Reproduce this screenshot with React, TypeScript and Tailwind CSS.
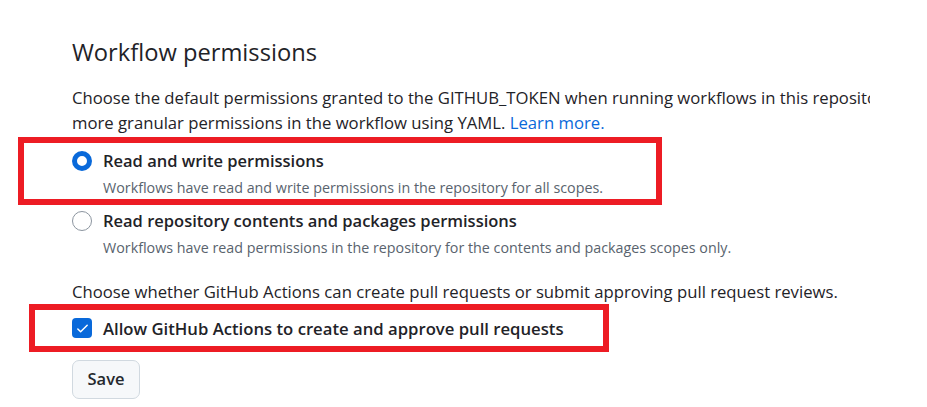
import React from 'react';

const RedMark = () => (
    <span className="pointer-events-none absolute inset-0 border-[6px] border-[#ed1c24]" />
);

interface OptionProps {
    label: string;
    hint: string;
    checked?: boolean;
}

const RadioOption = ({ label, hint, checked }: OptionProps) => (
    <div className="flex items-start gap-[11px]">
        <span
            className={
                checked
                    ? 'mt-[2px] h-[20px] w-[20px] shrink-0 rounded-full border-[5px] border-[#0969da] bg-white'
                    : 'mt-[2px] h-[20px] w-[20px] shrink-0 rounded-full border border-[#8c959f] bg-white'
            }
        />
        <div>
            <div className="text-[16.5px] leading-[24px] font-semibold text-[#1f2328]">{label}</div>
            <div className="mt-[5px] text-[14.3px] leading-[20px] whitespace-nowrap text-[#59636e]">{hint}</div>
        </div>
    </div>
);

export default function App() {
    return (
        <div className="h-[407px] w-[927px] overflow-hidden bg-white font-['Open_Sans',sans-serif] text-[#1f2328]">
            <div className="relative ml-[72px] w-[798px] pt-[35px]">
                <h2 className="text-[23.7px] leading-[34px] font-normal">Workflow permissions</h2>

                <div className="mt-[16px] overflow-hidden text-[16.7px] leading-[25px]">
                    <p className="whitespace-nowrap">
                        Choose the default permissions granted to the GITHUB_TOKEN when running workflows in this repository. You can specify
                    </p>
                    <p className="whitespace-nowrap">
                        more granular permissions in the workflow using YAML.{' '}
                        <a className="text-[#0969da]">Learn more.</a>
                    </p>
                </div>

                <div className="relative mt-[2px] -ml-[54px] h-[68px] w-[644px] pt-[12px] pl-[54px]">
                    <RedMark />
                    <RadioOption
                        checked
                        label="Read and write permissions"
                        hint="Workflows have read and write permissions in the repository for all scopes."
                    />
                </div>

                <div className="mt-[4px]">
                    <RadioOption
                        label="Read repository contents and packages permissions"
                        hint="Workflows have read permissions in the repository for the contents and packages scopes only."
                    />
                </div>

                <p className="mt-[21px] text-[16.7px] leading-[25px] whitespace-nowrap">
                    Choose whether GitHub Actions can create pull requests or submit approving pull request reviews.
                </p>

                <div className="relative -ml-[43px] flex h-[48px] w-[580px] items-center gap-[11px] pl-[43px]">
                    <RedMark />
                    <span className="flex h-[20px] w-[20px] shrink-0 items-center justify-center rounded-[4px] bg-[#0969da]">
                        <svg viewBox="0 0 16 16" className="h-[15px] w-[15px]" fill="none" stroke="white" strokeWidth="1.6" strokeLinecap="round" strokeLinejoin="round">
                            <path d="M3 8.5l3 3 7-7" />
                        </svg>
                    </span>
                    <span className="text-[16.7px] leading-[25px] font-semibold">
                        Allow GitHub Actions to create and approve pull requests
                    </span>
                </div>

                <button className="mt-[8px] h-[39px] w-[68px] rounded-[7px] border border-[#d1d9e0] bg-[#f6f8fa] text-[16.5px] font-semibold text-[#25292e]">
                    Save
                </button>
            </div>
        </div>
    );
}
